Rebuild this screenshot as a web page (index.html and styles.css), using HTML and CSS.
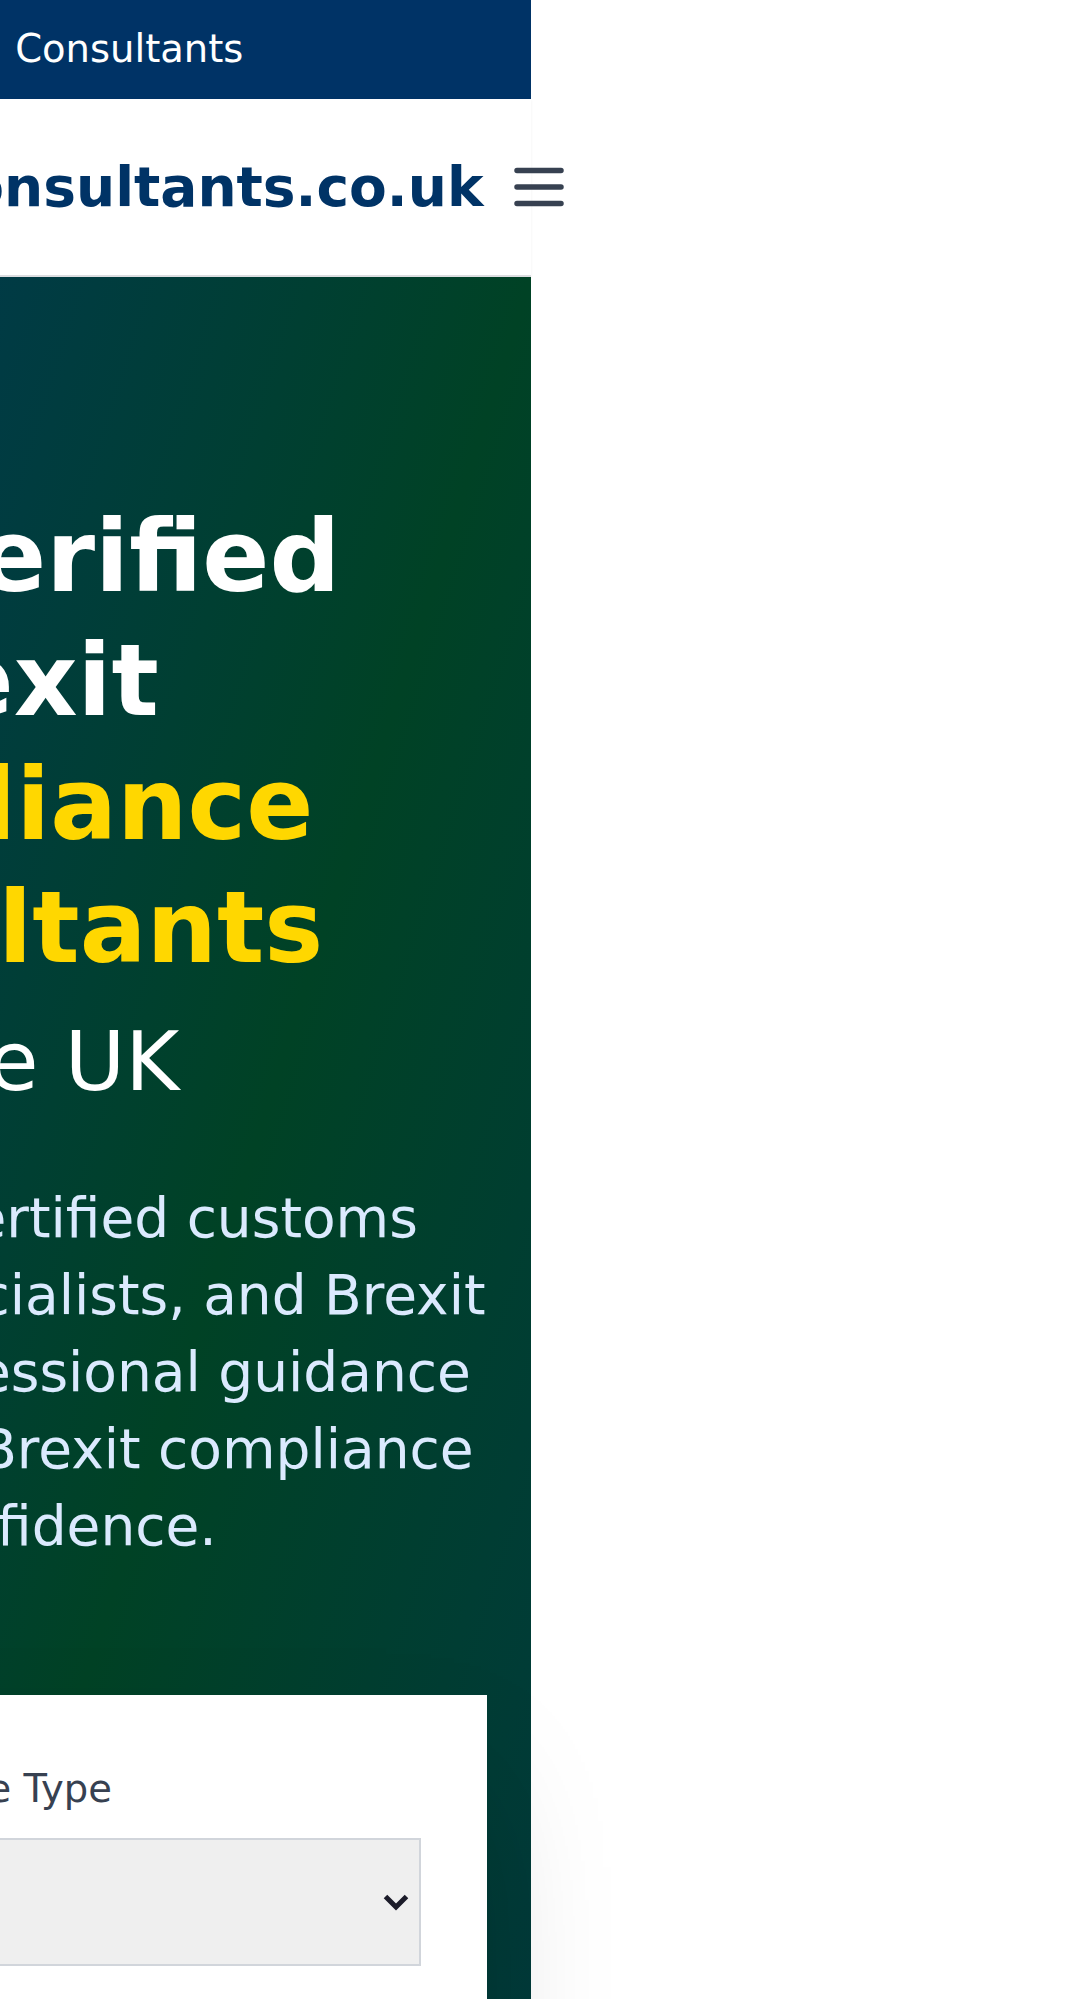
FILE: index.html
```html
<!DOCTYPE html>
<html lang="en">
<head>
<meta charset="utf-8">
<title>Brexit Compliance Consultants</title>
<link rel="stylesheet" href="styles.css">
</head>
<body>
<div class="page">
  <div class="topbar"><span>Expert Brexit Consultants</span></div>
  <header class="site-header">
    <nav class="nav">
      <a class="logo" href="#">BrexitComplianceConsultants.co.uk</a>
      <button class="menu-btn" type="button" aria-label="Open menu">
        <svg class="menu-icon" viewBox="0 0 24 24" fill="none" stroke="currentColor" stroke-width="2" stroke-linecap="round" stroke-linejoin="round"><path d="M4 6h16M4 12h16M4 18h16"/></svg>
      </button>
    </nav>
  </header>
  <section class="hero">
    <div class="hero-inner">
      <h1 class="hero-title">Hire Verified Brexit <span class="accent">Compliance Consultants</span><span class="region">in the UK</span></h1>
      <p class="lead">Connect with certified customs agents, trade specialists, and Brexit experts. Get professional guidance to navigate your Brexit compliance with confidence.</p>
      <form class="search-card">
        <label class="field-label" for="service">Service Type</label>
        <div class="select-wrap">
          <select id="service" class="field-select">
            <option>All Services</option>
            <option>Customs Brokers</option>
            <option>Trade Compliance</option>
          </select>
          <svg class="select-chevron" viewBox="0 0 26 18" fill="none" stroke="#1c1c2a" stroke-width="5"><polyline points="2.5,3.5 13,14 23.5,3.5"/></svg>
        </div>
        <label class="field-label" for="location">Location</label>
        <input id="location" class="field-input" type="text">
      </form>
    </div>
  </section>
</div>
</body>
</html>
```
FILE: styles.css
```css
html, body {
  margin: 0;
  padding: 0;
  overflow-x: hidden;
  background: #ffffff;
}

body {
  font-family: "DejaVu Sans", "Noto Sans", sans-serif;
}

.page {
  width: 1081px;
  margin-left: -550px;
}

.topbar {
  box-sizing: border-box;
  height: 99px;
  padding: 0 0 2px 0;
  background: #003366;
  color: #ffffff;
  font-size: 38.5px;
  word-spacing: 7px;
  display: flex;
  align-items: center;
  justify-content: center;
  white-space: nowrap;
}

.site-header {
  background: #ffffff;
  border-bottom: 2.75px solid #dcdde0;
  box-shadow: 0 1px 3px rgba(0, 0, 0, 0.06);
}

.nav {
  height: 176px;
  margin-right: -62.5px;
  display: flex;
  align-items: center;
  justify-content: flex-end;
}

.logo {
  color: #003366;
  font-weight: bold;
  font-size: 55px;
  text-decoration: none;
  white-space: nowrap;
}

.menu-btn {
  flex: none;
  width: 110px;
  height: 110px;
  padding: 22px;
  border: 0;
  background: transparent;
  color: #374151;
  display: flex;
}

.menu-icon {
  width: 66px;
  height: 66px;
}

.hero {
  padding-top: 218px;
  background-color: #003a3f;
  background-image: linear-gradient(to bottom right, #003366 0%, #004225 50%, #00334f 100%);
  background-size: 1081px 3400px;
  background-repeat: no-repeat;
}

.hero-inner {
  width: 992px;
  margin: 0 auto;
  text-align: center;
}

.hero-title {
  margin: 0;
  color: #ffffff;
  font-size: 99px;
  line-height: 123.75px;
  font-weight: bold;
}

.accent {
  display: block;
  color: #ffd700;
}

.region {
  display: block;
  margin-top: 22px;
  font-size: 82.5px;
  line-height: 99px;
  font-weight: normal;
}

.lead {
  width: 1010px;
  margin: 69px 0 130px -9px;
  color: #dbeafe;
  font-size: 55px;
  line-height: 77px;
}

.search-card {
  background: #ffffff;
  padding: 66px;
  box-shadow: 0 68.75px 137.5px -33px rgba(0, 0, 0, 0.25);
}

.field-label {
  display: block;
  color: #374151;
  font-size: 38.5px;
  line-height: 55px;
  margin-bottom: 22px;
}

.select-wrap {
  position: relative;
  margin-bottom: 44px;
}

.field-select {
  display: block;
  width: 100%;
  height: 128px;
  -webkit-appearance: none;
  appearance: none;
  background: #efefef;
  border: 2.75px solid #d1d5db;
  border-radius: 0;
  font-family: inherit;
  font-size: 38.5px;
  color: #111827;
  padding: 0 80px 0 30px;
}

.select-chevron {
  position: absolute;
  right: 12px;
  top: 55px;
  width: 26px;
  height: 18px;
  pointer-events: none;
}

.field-input {
  display: block;
  box-sizing: border-box;
  width: 100%;
  height: 128px;
  border: 2.75px solid #d1d5db;
  background: #ffffff;
  margin-bottom: 200px;
}
```
